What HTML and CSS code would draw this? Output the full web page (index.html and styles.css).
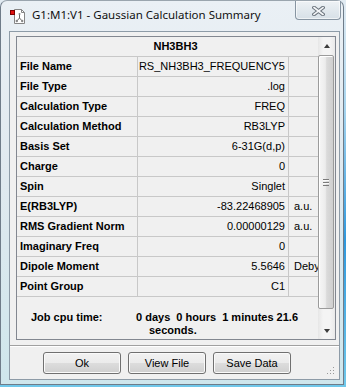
FILE: index.html
```html
<!DOCTYPE html>
<html lang="en">
<head>
  <meta charset="UTF-8">
  <title>G1:M1:V1 - Gaussian Calculation Summary</title>
  <link rel="stylesheet" href="styles.css">
</head>
<body>

  <div class="janela">

    <!-- Barra de titulo -->
    <div class="titulo">
      <svg class="icone" width="16" height="16" viewBox="0 0 16 16">
        <path d="M4.5 1.5 H11.5 L14.5 4.5 V15.5 H4.5 Z" fill="#fff" stroke="#858585"/>
        <path d="M11.5 1.5 V4.5 H14.5" fill="none" stroke="#858585"/>
        <path d="M9.5 6 V10 M9.5 10 L7 12.8 M9.5 10 L12 12.8" fill="none" stroke="#666" stroke-width="1"/>
        <circle cx="6.8" cy="13" r="1.2" fill="#888"/>
        <circle cx="12.2" cy="13" r="1.2" fill="#888"/>
        <circle cx="9.5" cy="6" r="1" fill="#888"/>
        <rect x="0.5" y="2.5" width="4" height="4" fill="#e01010" stroke="#7a0000"/>
      </svg>
      <span class="titulo-texto">G1:M1:V1 - Gaussian Calculation Summary</span>
      <div class="fechar">
        <svg width="13" height="10" viewBox="0 0 13 10">
          <path d="M2 1.5 L11 8.5 M11 1.5 L2 8.5" stroke="#6a737c" stroke-width="3.6" stroke-linecap="square"/>
          <path d="M2 1.5 L11 8.5 M11 1.5 L2 8.5" stroke="#f4f6f8" stroke-width="1.6" stroke-linecap="square"/>
        </svg>
      </div>
    </div>

    <!-- Area do cliente -->
    <div class="cliente">
      <div class="painel">
        <div class="grade">
          <div class="tabela">
            <div class="cabecalho">NH3BH3</div>
            <div class="linha"><div class="rotulo">File Name</div><div class="valor">RS_NH3BH3_FREQUENCY5</div><div class="unidade"></div></div>
            <div class="linha"><div class="rotulo">File Type</div><div class="valor">.log</div><div class="unidade"></div></div>
            <div class="linha"><div class="rotulo">Calculation Type</div><div class="valor">FREQ</div><div class="unidade"></div></div>
            <div class="linha"><div class="rotulo">Calculation Method</div><div class="valor">RB3LYP</div><div class="unidade"></div></div>
            <div class="linha"><div class="rotulo">Basis Set</div><div class="valor">6-31G(d,p)</div><div class="unidade"></div></div>
            <div class="linha"><div class="rotulo">Charge</div><div class="valor">0</div><div class="unidade"></div></div>
            <div class="linha"><div class="rotulo">Spin</div><div class="valor">Singlet</div><div class="unidade"></div></div>
            <div class="linha"><div class="rotulo">E(RB3LYP)</div><div class="valor">-83.22468905</div><div class="unidade">a.u.</div></div>
            <div class="linha"><div class="rotulo">RMS Gradient Norm</div><div class="valor">0.00000129</div><div class="unidade">a.u.</div></div>
            <div class="linha"><div class="rotulo">Imaginary Freq</div><div class="valor">0</div><div class="unidade"></div></div>
            <div class="linha"><div class="rotulo">Dipole Moment</div><div class="valor">5.5646</div><div class="unidade">Debye</div></div>
            <div class="linha"><div class="rotulo">Point Group</div><div class="valor">C1</div><div class="unidade"></div></div>
            <div class="job">
              <div class="job-rotulo">Job cpu time:</div>
              <div class="job-valor">
                <div class="job-linha">0 days  0 hours  1 minutes 21.6</div>
                <div class="job-linha job-resto">seconds.</div>
              </div>
            </div>
          </div>
          <div class="rolagem">
            <div class="seta"><span class="seta-cima"></span></div>
            <div class="polegar"><span class="pegada"></span></div>
            <div class="seta seta-baixo-box"><span class="seta-baixo"></span></div>
          </div>
        </div>
      </div>

      <div class="botoes">
        <button class="botao">Ok</button>
        <button class="botao">View File</button>
        <button class="botao">Save Data</button>
        <svg class="redim" width="8" height="8" viewBox="0 0 8 8">
          <rect x="6" y="0" width="1" height="1" fill="#999"/>
          <rect x="3" y="3" width="1" height="1" fill="#999"/>
          <rect x="6" y="3" width="1" height="1" fill="#999"/>
          <rect x="0" y="6" width="1" height="1" fill="#999"/>
          <rect x="3" y="6" width="1" height="1" fill="#999"/>
          <rect x="6" y="6" width="1" height="1" fill="#999"/>
        </svg>
      </div>
    </div>

  </div>

</body>
</html>
```

FILE: styles.css
```css
body {
  margin: 0;
  width: 346px;
  height: 387px;
  background: linear-gradient(180deg, #e2ebf2 0%, #a6d4ee 28%, #2f98dd 62%, #70c8ea 100%);
  font-family: "Liberation Sans", Arial, sans-serif;
  font-size: 11px;
  color: #000;
}

.janela {
  width: 344px;
  height: 385px;
  box-sizing: border-box;
  border: 1px solid #6f7c89;
  border-top-color: #9aa5ae;
  border-radius: 7px 7px 0 0;
  background: linear-gradient(180deg, #eaf0f5 0%, #e0e9ef 45%, #cfe6ec 100%);
  display: flex;
  flex-direction: column;
}

/* titulo */
.titulo {
  height: 30px;
  display: flex;
  align-items: flex-start;
  padding-left: 9px;
}
.icone {
  margin-top: 7px;
  flex-shrink: 0;
}
.titulo-texto {
  margin-left: 6px;
  line-height: 28px;
  font-family: "Noto Sans", "Open Sans", sans-serif;
  font-size: 11.5px;
  color: #111;
}
.fechar {
  margin-left: auto;
  margin-right: 2px;
  width: 44px;
  height: 18px;
  border: 1px solid #8795a2;
  border-top: none;
  border-radius: 0 0 4px 4px;
  background: linear-gradient(180deg, #eef2f5 0%, #e2e9ee 50%, #d7e0e7 100%);
  box-shadow: inset 0 0 0 1px rgba(255, 255, 255, 0.6);
  display: flex;
  align-items: center;
  justify-content: center;
}
.fechar svg {
  margin-top: 2px;
}

/* cliente */
.cliente {
  margin: 0 3px 0 8px;
  height: 349px;
  box-sizing: border-box;
  border: 1px solid #8d9ba7;
  background: #f0f0f0;
  display: flex;
  flex-direction: column;
}
.painel {
  padding: 4px 3px 5px 6px;
  border-bottom: 1px solid #a0a0a0;
  box-shadow: 0 1px 0 #fff;
}
.grade {
  height: 304px;
  box-sizing: border-box;
  border: 1px solid #828790;
  display: flex;
}
.tabela {
  width: 301px;
  display: flex;
  flex-direction: column;
}
.cabecalho {
  height: 19px;
  line-height: 19px;
  border-bottom: 1px solid #c8c8c8;
  font-weight: bold;
  text-align: center;
  padding-left: 16px;
}
.linha {
  height: 19px;
  line-height: 19px;
  border-bottom: 1px solid #c8c8c8;
  display: flex;
  white-space: nowrap;
}
.rotulo {
  width: 121px;
  box-sizing: border-box;
  padding-left: 3px;
  border-right: 1px solid #c8c8c8;
  font-weight: bold;
}
.valor {
  width: 151px;
  box-sizing: border-box;
  padding-right: 3px;
  border-right: 1px solid #c8c8c8;
  text-align: right;
}
.unidade {
  flex: 1;
  padding-left: 5px;
  overflow: hidden;
}
.job {
  flex: 1;
  display: flex;
  padding: 14px 0 0 14px;
  line-height: 13px;
  font-weight: bold;
}
.job-rotulo {
  width: 105px;
  flex-shrink: 0;
}
.job-linha {
  white-space: pre;
}
.job-resto {
  padding-left: 13px;
}

/* barra de rolagem */
.rolagem {
  width: 17px;
  display: flex;
  flex-direction: column;
  background: linear-gradient(90deg, #e6e6e6 0%, #f4f4f4 30%, #f4f4f4 70%, #e9e9e9 100%);
}
.seta {
  height: 17px;
  display: flex;
  align-items: center;
  justify-content: center;
}
.seta-baixo-box {
  margin-top: auto;
}
.seta-cima {
  width: 0;
  height: 0;
  border-left: 3.5px solid transparent;
  border-right: 3.5px solid transparent;
  border-bottom: 4px solid #3c3c3c;
}
.seta-baixo {
  width: 0;
  height: 0;
  border-left: 3.5px solid transparent;
  border-right: 3.5px solid transparent;
  border-top: 4px solid #3c3c3c;
}
.polegar {
  margin: 1px 1px 0 0;
  height: 254px;
  box-sizing: border-box;
  border: 1px solid #9b9b9b;
  border-radius: 2px;
  background: linear-gradient(90deg, #f6f6f6 0%, #ececec 45%, #dadada 55%, #cfcfcf 100%);
  box-shadow: inset 1px 1px 0 #fff;
  display: flex;
  align-items: center;
  justify-content: center;
}
.pegada {
  width: 6px;
  height: 7px;
  background: repeating-linear-gradient(180deg, #7a7a7a 0, #7a7a7a 1px, #fafafa 1px, #fafafa 2px, transparent 2px, transparent 3px);
}

/* botoes */
.botoes {
  flex: 1;
  display: flex;
  gap: 7px;
  padding: 6px 0 0 33px;
}
.botao {
  width: 78px;
  height: 22px;
  border: 1px solid #707070;
  border-radius: 3px;
  background: linear-gradient(180deg, #f2f2f2 0%, #ebebeb 50%, #dddddd 50%, #cfcfcf 100%);
  box-shadow: inset 0 0 0 1px #fafafa;
  font-family: "Liberation Sans", Arial, sans-serif;
  font-size: 11px;
  color: #000;
  padding: 0;
}
.redim {
  margin-left: auto;
  margin-right: 4px;
  align-self: flex-end;
  margin-bottom: 4px;
}
```
